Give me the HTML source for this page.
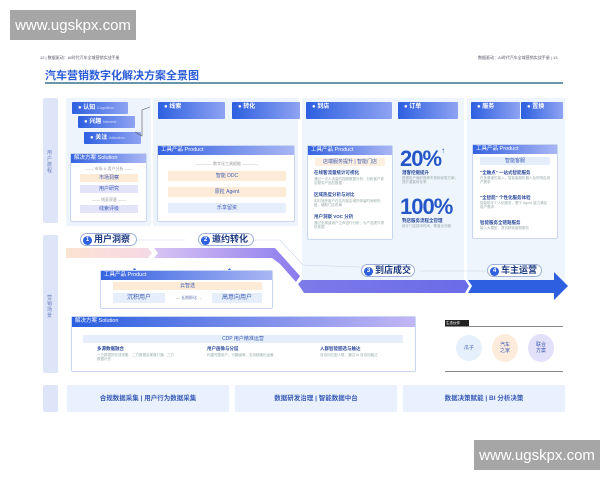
<!DOCTYPE html><html><head><meta charset="utf-8"><style>
*{margin:0;padding:0;box-sizing:border-box}
body{width:600px;height:480px;background:#fff;position:relative;overflow:hidden;font-family:"Liberation Sans","Noto Sans CJK SC",sans-serif}
.a{position:absolute}
.wm{background:#a6a6a6;color:#fff;font-size:15px;display:flex;align-items:center;justify-content:center}
.jb{position:absolute;height:12px;background:linear-gradient(90deg,#2d5fe0,#8fa3f2);color:#fff;font-size:6px;font-weight:bold;padding-left:6px;line-height:12px;border-radius:1px}
.jb.t{height:17px;line-height:11px}
.pan{position:absolute;background:#fff;border:1px solid #c9d6f2;border-radius:2px}
.ph{height:9px;background:linear-gradient(90deg,#3563e0,#a9b6f4);color:#fff;font-size:5.5px;line-height:9px;padding-left:3px}
.chip{position:absolute;font-size:5px;color:#3a5bb5;text-align:center;line-height:8px;height:8px}
.side{position:absolute;left:43px;width:15px;background:#dfe5f8;border-radius:2px}
.step{position:absolute;height:13px;border:1px solid #9db0d8;border-radius:7px;background:#fff;font-size:9px;font-weight:bold;color:#1c3a80;line-height:11px;padding-left:2px}
.step b{display:inline-block;width:9px;height:9px;border-radius:50%;background:#2d5fe0;color:#fff;font-size:6px;line-height:9px;text-align:center;margin-right:2px;vertical-align:1px}
.bt{position:absolute;top:385px;height:27px;background:#e8f1fd;color:#3a5bb5;font-size:6.5px;font-weight:bold;text-align:center;line-height:27px}
.tx{position:absolute;font-size:3.5px;color:#9aa;line-height:4px}
.hd{position:absolute;font-size:4.5px;color:#2b4a9c;font-weight:bold}
</style></head><body>
<div class="a wm" style="left:10px;top:10px;width:126px;height:30px">www.ugskpx.com</div>
<div class="a wm" style="left:474px;top:440px;width:126px;height:30px">www.ugskpx.com</div>
<div class="a" style="left:40px;top:55px;font-size:4px;color:#556">12 | 数据驱动：AI时代汽车全域营销实战手册</div>
<div class="a" style="left:478px;top:55px;font-size:4px;color:#556">数据驱动：AI时代汽车全域营销实战手册 | 13</div>
<div class="a" style="left:45px;top:67px;font-size:11px;font-weight:bold;color:#2a5bd7">汽车营销数字化解决方案全景图</div>
<div class="a" style="left:45px;top:82px;width:518px;height:2px;background:#6a97a8"></div>
<div class="side" style="top:98px;height:125px"></div>
<div class="a" style="left:47px;top:150px;font-size:5px;color:#6b80c0;width:6px;line-height:6px">用户旅程</div>
<div class="side" style="top:235px;height:138px"></div>
<div class="a" style="left:47px;top:295px;font-size:5px;color:#6b80c0;width:6px;line-height:6px">营销场景</div>
<div class="side" style="top:385px;height:27px"></div>
<!-- journey panels bg -->
<div class="a" style="left:66px;top:98px;width:85px;height:128px;background:#eef4fc"></div>
<div class="a" style="left:153px;top:98px;width:145px;height:128px;background:#eef4fc"></div>
<div class="a" style="left:302px;top:98px;width:162px;height:185px;background:#eef5fc;border-radius:0 0 4px 4px"></div>
<div class="a" style="left:467px;top:98px;width:98px;height:185px;background:#eef5fc"></div>
<div class="jb" style="left:72px;top:102px;width:56px">● 认知 <span style="font-weight:normal;font-size:4px;opacity:.7">Cognition</span></div>
<div class="jb" style="left:78px;top:116px;width:57px">● 兴趣 <span style="font-weight:normal;font-size:4px;opacity:.7">Interest</span></div>
<div class="jb" style="left:84px;top:132px;width:57px">● 关注 <span style="font-weight:normal;font-size:4px;opacity:.7">Attention</span></div>
<div class="jb t" style="left:158px;top:102px;width:67px">● 线索</div>
<div class="jb t" style="left:232px;top:102px;width:68px">● 转化</div>
<div class="jb t" style="left:306px;top:102px;width:86px">● 到店</div>
<div class="jb t" style="left:398px;top:102px;width:60px">● 订单</div>
<div class="jb t" style="left:471px;top:102px;width:49px">● 服务</div>
<div class="jb t" style="left:521px;top:102px;width:42px">● 置换</div>
<!-- panels row -->
<div class="pan" style="left:70px;top:153px;width:77px;height:69px"><div class="ph">解决方案 Solution</div></div>
<div class="chip" style="left:80px;top:165px;width:58px;color:#999;font-size:4px">—— 市场 &amp; 用户分析 ——</div>
<div class="chip" style="left:80px;top:174px;width:58px;background:#fdebd8">市场洞察</div>
<div class="chip" style="left:80px;top:185px;width:58px;background:#e3e4fa">用户研究</div>
<div class="chip" style="left:80px;top:196px;width:58px;color:#999;font-size:4px">—— 线索获客 ——</div>
<div class="chip" style="left:80px;top:205px;width:58px;background:#e3e4fa">线索评级</div>
<div class="pan" style="left:157px;top:145px;width:138px;height:77px"><div class="ph">工具产品 Product</div></div>
<div class="chip" style="left:168px;top:160px;width:118px;color:#999;font-size:4px">———— 数字化工具赋能 ————</div>
<div class="chip" style="left:168px;top:171px;width:118px;height:10px;line-height:10px;background:#fdebd8">智能 DDC</div>
<div class="chip" style="left:168px;top:187px;width:118px;height:10px;line-height:10px;background:#fdebd8">原粒 Agent</div>
<div class="chip" style="left:168px;top:203px;width:118px;height:10px;line-height:10px;background:#e6eefb">乐享留资</div>
<div class="pan" style="left:307px;top:145px;width:86px;height:95px"><div class="ph">工具产品 Product</div></div>
<div class="chip" style="left:315px;top:158px;width:70px;background:#fdf0e0">店端服务提升 | 智能门店</div>
<div class="hd" style="left:314px;top:170px">在线客流量统计可视化</div><div class="tx" style="left:314px;top:177px;width:72px">通过一天人流量的视频数据分析，分析客户到店服务产品的数据</div>
<div class="hd" style="left:314px;top:192px">区域热度分析与对比</div><div class="tx" style="left:314px;top:199px;width:72px">实时追踪客户在店内各区域的停留时间和热度，辅助门店布局</div>
<div class="hd" style="left:314px;top:214px">用户洞察 VOC 分析</div><div class="tx" style="left:314px;top:221px;width:72px">通过全渠道用户之声进行分析，为产品提升提供依据</div>
<div class="a" style="left:400px;top:146px;font-size:22px;font-weight:bold;color:#2456c8;letter-spacing:-1px">20%<span style="font-size:8px;vertical-align:top">↑</span></div>
<div class="hd" style="left:402px;top:170px">潜客挖掘提升</div><div class="tx" style="left:402px;top:176px;width:56px">根据用户偏好推荐车型和优惠方案，提升潜客转化率</div>
<div class="a" style="left:400px;top:194px;font-size:22px;font-weight:bold;color:#2456c8;letter-spacing:-1px">100%</div>
<div class="hd" style="left:402px;top:218px">到店服务流程全管理</div><div class="tx" style="left:402px;top:224px;width:56px">统计门店接待时间，覆盖全流程</div>
<div class="pan" style="left:472px;top:144px;width:86px;height:95px"><div class="ph">工具产品 Product</div></div>
<div class="chip" style="left:480px;top:157px;width:70px;background:#e3edfb">智能客服</div>
<div class="hd" style="left:480px;top:170px">"全触点" 一站式智能服务</div><div class="tx" style="left:480px;top:176px;width:70px">在多渠道的接入，智能客服机器人及时响应用户需求</div>
<div class="hd" style="left:480px;top:195px">"全智能" 个性化服务体验</div><div class="tx" style="left:480px;top:201px;width:70px">智能助手个人化服务，基于 Agent 能力满足用户需求</div>
<div class="hd" style="left:480px;top:220px">智能服务全链路服务</div><div class="tx" style="left:480px;top:226px;width:70px">接入大模型，提供精准客服服务</div>
<!-- band -->
<svg class="a" style="left:0;top:0" width="600" height="480">
<defs><linearGradient id="g1" x1="0" x2="1"><stop offset="0" stop-color="#fbe3d2"/><stop offset="1" stop-color="#f4d9e6"/></linearGradient>
<linearGradient id="g2" x1="0" x2="1"><stop offset="0" stop-color="#d9c4f4"/><stop offset="1" stop-color="#8b7bee"/></linearGradient>
<linearGradient id="g3" x1="0" x2="1"><stop offset="0" stop-color="#7d7ae9"/><stop offset="1" stop-color="#6a6be8"/></linearGradient></defs>
<polygon points="66,248 148,248 152,253 148,258 66,258" fill="url(#g1)"/>
<polygon points="154,248 275,248 300,276 296,282 280,264 272,258 154,258 158,253" fill="url(#g2)"/>
<polygon points="298,284 302,280 465,280 469,286 465,293 304,293" fill="url(#g3)"/>
<polygon points="468,280 554,280 554,272 568,286 554,300 554,293 468,293 472,286" fill="#2d5fe0"/>
<path d="M135,240 L185,240 M255,240 L280,240 L303,265 L360,267 M420,271 L486,271" stroke="#c8d2e6" stroke-width="0.6" fill="none"/>
<path d="M135,132 L142,136 L142,110 L150,107" stroke="#555" stroke-width="0.6" fill="none"/>
<text x="131" y="274" fill="#3166e0" font-size="7">⬇</text><text x="226" y="274" fill="#3166e0" font-size="7">⬆</text>
</svg>
<div class="step" style="left:80px;top:233px;width:57px"><b>1</b>用户洞察</div>
<div class="step" style="left:198px;top:233px;width:56px"><b>2</b>邀约转化</div>
<div class="step" style="left:361px;top:264px;width:54px"><b>3</b>到店成交</div>
<div class="step" style="left:487px;top:264px;width:55px"><b>4</b>车主运营</div>
<div class="pan" style="left:100px;top:270px;width:173px;height:39px"><div class="ph">工具产品 Product</div></div>
<div class="chip" style="left:113px;top:282px;width:149px;background:#fdebd8">云智选</div>
<div class="chip" style="left:113px;top:293px;width:52px;height:10px;line-height:10px;background:#e6eefb;font-size:6px">沉积用户</div>
<div class="chip" style="left:168px;top:293px;width:42px;height:10px;line-height:10px;color:#6a7ab5;font-size:4px">— 长期孵化 →</div>
<div class="chip" style="left:212px;top:293px;width:50px;height:10px;line-height:10px;background:#e6eefb;font-size:6px">高意向用户</div>
<div class="pan" style="left:71px;top:316px;width:345px;height:56px"><div class="ph" style="height:10px;background:linear-gradient(90deg,#2a5fe0,#c2b6f4)">解决方案 Solution</div></div>
<div class="chip" style="left:83px;top:335px;width:320px;height:8px;background:#e6eefb">CDP 用户精准运营</div>
<div class="hd" style="left:97px;top:346px">多源数据融合</div><div class="tx" style="left:97px;top:353px;width:80px">一方数据的在线采集、二方数据全渠道打通、三方数据补充</div>
<div class="hd" style="left:207px;top:346px">用户画像与分层</div><div class="tx" style="left:207px;top:353px;width:80px">构建完整用户、兴趣画像，支持精细化运营</div>
<div class="hd" style="left:320px;top:346px">人群智能圈选与触达</div><div class="tx" style="left:320px;top:353px;width:80px">自动化匹配人群、通过 Al 自动化触达</div>
<div class="a" style="left:445px;top:320px;width:24px;height:6px;background:#222;color:#fff;font-size:3.5px;line-height:6px;padding-left:1px">生态伙伴</div>
<div class="a" style="left:445px;top:326px;width:118px;height:1px;background:#888"></div>
<div class="a" style="left:445px;top:371px;width:118px;height:1px;background:#888"></div>
<div class="a" style="left:456px;top:335px;width:26px;height:26px;border-radius:50%;background:#e6f0fc;font-size:5px;color:#3a5bb5;text-align:center;line-height:26px">瓜子</div>
<div class="a" style="left:492px;top:334px;width:26px;height:28px;border-radius:50%;background:#fdecdc;font-size:5px;color:#3a5bb5;text-align:center;padding-top:8px;line-height:6px">汽车<br>之家</div>
<div class="a" style="left:528px;top:334px;width:26px;height:28px;border-radius:50%;background:#e3e0fa;font-size:5px;color:#3a5bb5;text-align:center;padding-top:8px;line-height:6px">联合<br>方案</div>
<div class="bt" style="left:67px;width:162px">合规数据采集 | 用户行为数据采集</div>
<div class="bt" style="left:235px;width:162px">数据研发治理 | 智能数据中台</div>
<div class="bt" style="left:403px;width:162px">数据决策赋能 | BI 分析决策</div>
</body></html>
